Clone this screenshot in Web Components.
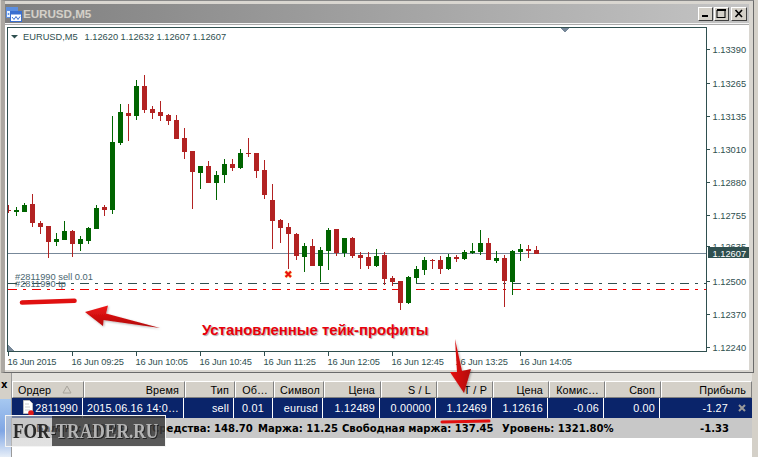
<!DOCTYPE html>
<html>
<head>
<meta charset="utf-8">
<style>
html, body { margin: 0; padding: 0; }
body { position: relative; width: 758px; height: 457px; overflow: hidden; background: #d4d0c8; font-family: "Liberation Sans", sans-serif; }
</style>
</head>
<body>
<mt-window caption="EURUSD,M5"><mt-chart></mt-chart></mt-window>
<mt-terminal>
    <mt-header-row></mt-header-row>
    <mt-order-row></mt-order-row>
    <mt-total-row></mt-total-row>
</mt-terminal>
<mt-annotations></mt-annotations>
<mt-watermark></mt-watermark>

<script>
const COLUMNS = '72px 101px 50px 39px 50px 57px 56px 56px 56px 56px 56px 91px'

class MT_Window extends HTMLElement {
    constructor() {
        super()
        this.attachShadow({mode: 'open'})
        this.shadowRoot.innerHTML = `
            <style>
                :host { display: block; box-sizing: border-box; width: 753px; height: 373px; margin-left: 1px; background: #d9d6d0;
                        border-top: 1px solid #8a8a8a; border-left: 4px solid #aca8a2; border-right: 1px solid #6a6a6a; border-bottom: 1px solid #6a6a6a;
                        padding: 3px 4px 3px 0; }
                .title { display: flex; align-items: center; height: 19px; padding: 0 1px 0 1px; background: linear-gradient(to right, #7f7f7f, #c4c4c4); }
                .title svg.icon { margin-right: 1px; flex: none; }
                .caption { flex: 1; font: bold 11.6px "Liberation Sans", sans-serif; color: #d4d0c8; text-shadow: 1px 0 0 #8c8c8c; }
                .btn { box-sizing: border-box; width: 15px; height: 14px; margin-left: 1px; background: #d4d0c8; display: flex; align-items: center; justify-content: center;
                       border: 1px solid; border-color: #fff #404040 #404040 #fff; }
                .btn.close { width: 16px; margin: 0 1px 0 2px; }
                .client { border-top: 1px solid #f4f4f4; height: 346px; background: #fff; box-shadow: inset 0 1px 0 #aaa; }
            </style>
            <div class="title">
                <svg class="icon" width="16" height="16" viewBox="0 0 16 16">
                    <rect x="0.5" y="1.5" width="11" height="10" fill="#e8f2ff" stroke="#5b8ee0"/>
                    <rect x="1" y="2" width="10" height="3" fill="#5b8ee0"/>
                    <rect x="4.5" y="5.5" width="11" height="10" fill="#fff" stroke="#3a6fd0"/>
                    <rect x="5" y="6" width="10" height="2.5" fill="#3a6fd0"/>
                    <path d="M6 11 8 13.5 10 10.5 12 13.5 14 10.5" fill="none" stroke="#3a6fd0"/>
                    <path d="M2 7 3 9M2 9 3 7" stroke="#5b8ee0"/>
                </svg>
                <span class="caption"></span>
                <div class="btn"><svg width="9" height="9"><rect x="1" y="6" width="6" height="2" fill="#000"/></svg></div>
                <div class="btn"><svg width="11" height="10"><rect x="1" y="1.5" width="8" height="7" fill="none" stroke="#000"/><rect x="1" y="0" width="9" height="2" fill="#000"/></svg></div>
                <div class="btn close"><svg width="10" height="9"><path d="M1.5 1 8 8M8 1 1.5 8" stroke="#000" stroke-width="1.6" fill="none"/></svg></div>
            </div>
            <div class="client"><slot></slot></div>
        `
        this.shadowRoot.querySelector('.caption').textContent = this.getAttribute('caption') || ''
    }
}

// x of first candle is 8, then every 8px: [high, body top, body bottom, low, bull?]
const CANDLES = [
    [205,210,211,213,0],[207,210,212,216,1],[203,205,212,212,1],[194,204,223,227,0],[221,223,227,234,0],
    [226,226,242,258,0],[233,239,242,246,1],[221,231,240,240,1],[230,231,244,257,0],[236,239,244,251,1],
    [227,228,241,244,1],[205,208,229,229,1],[205,207,210,216,0],[116,142,210,214,1],[104,112,143,145,1],
    [104,113,116,141,0],[80,86,116,120,1],[75,86,110,113,0],[106,109,113,119,0],[101,112,116,121,0],
    [114,115,121,125,0],[115,120,139,139,0],[128,138,152,159,0],[151,151,172,209,0],[166,166,173,189,1],
    [161,166,183,183,0],[171,175,183,200,1],[159,164,175,183,1],[159,164,168,171,0],[149,153,168,169,1],
    [138,153,154,157,0],[153,153,171,178,0],[160,170,195,199,0],[184,200,221,249,0],[219,220,228,243,0],
    [223,227,234,269,0],[233,234,256,260,0],[243,246,257,272,1],[239,246,266,266,0],[247,250,266,282,1],
    [228,230,251,270,1],[229,229,253,256,0],[238,238,253,257,1],[237,238,256,258,0],[252,255,258,269,0],
    [252,257,266,269,0],[249,256,266,267,1],[252,255,279,285,0],[276,278,282,286,0],[281,281,303,310,0],
    [276,277,303,304,1],[266,269,278,283,1],[257,260,270,275,1],[259,260,261,269,0],[256,260,269,274,0],
    [254,257,269,270,1],[255,257,259,262,0],[250,252,259,260,1],[243,251,253,254,1],[230,243,252,255,1],
    [238,243,260,260,0],[251,258,261,263,1],[255,258,281,307,0],[250,251,282,295,1],[244,249,252,261,1],
    [245,249,251,258,0],[246,250,254,254,0]
]
const PRICE_LABELS = [['1.13390',53],['1.13265',87],['1.13135',120],['1.13010',153],['1.12880',186],['1.12755',219],['1.12635',250],['1.12500',285],['1.12370',318],['1.12240',351]]
const TIME_LABELS = ['16 Jun 2015','16 Jun 09:25','16 Jun 10:05','16 Jun 10:45','16 Jun 11:25','16 Jun 12:05','16 Jun 12:45','16 Jun 13:25','16 Jun 14:05']

class MT_Chart extends HTMLElement {
    constructor() {
        super()
        this.attachShadow({mode: 'open'})
        this.shadowRoot.innerHTML = `
            <style>
                :host { display: block; }
                svg { display: block; }
                text { font: 9.3px "Liberation Sans", sans-serif; fill: #2f4f4f; }
            </style>
            <svg width="744" height="346" viewBox="5 24 744 346" shape-rendering="crispEdges">${this.getChart()}</svg>
        `
    }

    getChart() {
        let s = ''
        s += '<line x1="8" x2="706" y1="253.5" y2="253.5" stroke="#778899"/>'
        s += '<line x1="8" x2="706" y1="283.5" y2="283.5" stroke="#2f4f4f" stroke-dasharray="9 6 3 6"/>'
        s += '<line x1="8" x2="706" y1="289.5" y2="289.5" stroke="#f00000" stroke-dasharray="9 6 3 6"/>'
        CANDLES.forEach((c, i) => {
            const x = 8 + i * 8
            const col = c[4] ? '#006400' : '#b22222'
            s += `<rect x="${x}" y="${c[0]}" width="1" height="${c[3] - c[0]}" fill="${col}"/>`
            // the first candle is cut by the frame
            const bx = i == 0 ? x : x - 2
            const bw = i == 0 ? 3 : 5
            s += `<rect x="${bx}" y="${c[1]}" width="${bw}" height="${Math.max(c[2] - c[1], 1)}" fill="${col}"/>`
        })
        s += '<rect x="7.5" y="27.5" width="699" height="324" fill="none" stroke="#2f4f4f"/>'
        s += '<path d="M561 28H569L565 33Z" fill="#778899"/>'
        s += '<path d="M8 345V351H14Z" fill="#778899"/>'
        s += '<path d="M11 35H18L14.5 38.5Z" fill="#2f4f4f" shape-rendering="auto"/>'
        s += '<text x="23" y="40">EURUSD,M5<tspan x="84.5">1.12620</tspan><tspan x="120.5">1.12632</tspan><tspan x="156.5">1.12607</tspan><tspan x="192.5">1.12607</tspan></text>'
        PRICE_LABELS.forEach(p => {
            s += `<rect x="707" y="${p[1] - 4}" width="3" height="1" fill="#2f4f4f"/>`
            s += `<text x="712.5" y="${p[1]}">${p[0]}</text>`
        })
        TIME_LABELS.forEach((t, i) => {
            const x = 8 + i * 64
            s += `<rect x="${x}" y="352" width="1" height="4" fill="#2f4f4f"/>`
            s += `<text x="${x - .5}" y="365" textLength="${i ? 52.5 : 49}">${t}</text>`
        })
        s += '<rect x="708" y="247" width="41" height="11" fill="#2f4f4f"/>'
        s += '<text x="712.5" y="256.5" style="fill:#fff">1.12607</text>'
        s += '<text x="15" y="280" style="fill:#4a6670">#2811990 sell 0.01</text>'
        s += '<text x="15" y="286.5" style="fill:#4a6670">#2811990 tp</text>'
        s += '<g shape-rendering="auto"><path d="M285.5 271.5 291 277M291 271.5 285.5 277" stroke="#ffd27a" stroke-width="3.4"/><path d="M285.5 271.5 291 277M291 271.5 285.5 277" stroke="#e81010" stroke-width="2"/></g>'
        return s
    }
}

class MT_Terminal extends HTMLElement {
    constructor() {
        super()
        this.attachShadow({mode: 'open'})
        this.shadowRoot.innerHTML = `
            <style>
                :host { display: flex; height: 84px; }
                .strip { width: 11px; flex: none; display: flex; flex-direction: column; border-right: 1px solid #9a9a9a; }
                .strip .top { height: 26px; padding-top: 5px; box-sizing: border-box; font: bold 10px "DejaVu Sans", sans-serif; color: #000; line-height: 14px; padding-left: 1px; }
                .strip .bar { flex: 1; background: linear-gradient(to bottom, #a6c8f0, #80a6e4 55%, #e6eef8); }
                .main { width: 740px; flex: none; display: flex; flex-direction: column; padding-top: 8px; box-sizing: border-box; background: #e4e2dd; }
                .body { flex: 1; background: #fff; display: flex; flex-direction: column; }
                .edge { flex: 1; }
            </style>
            <div class="strip"><div class="top">x</div><div class="bar"></div></div>
            <div class="main"><div class="body"><slot></slot></div></div>
            <div class="edge"></div>
        `
    }
}

class MT_HeaderRow extends HTMLElement {
    constructor() {
        super()
        this.attachShadow({mode: 'open'})
        const cols = [['Ордер','left'],['Время'],['Тип'],['Об…'],['Символ','center'],['Цена'],['S / L'],['T / P'],['Цена'],['Комис…'],['Своп'],['Прибыль']]
        this.shadowRoot.innerHTML = `
            <style>
                :host { display: grid; grid-template-columns: ${COLUMNS}; height: 17px; }
                div { position: relative; box-sizing: border-box; height: 17px; background: #d4d0c8; color: #000; text-align: right; padding: 0 5px; overflow: hidden; white-space: nowrap;
                      font: 10.8px/16px "Liberation Sans", sans-serif; border: 1px solid; border-color: #fff #808080 #808080 #fff; letter-spacing: .15px; }
                .left { text-align: left; } .center { text-align: center; }
                svg { position: absolute; left: 49px; top: 3px; }
            </style>
            ${cols.map(c => `<div class="${c[1] || ''}">${c[0]}</div>`).join('')}
        `
        const sort = document.createElementNS('http://www.w3.org/2000/svg', 'svg')
        sort.setAttribute('width', '10')
        sort.setAttribute('height', '9')
        sort.innerHTML = '<path d="M5 1 9 8H1Z" fill="none" stroke="#a8a49c"/>'
        this.shadowRoot.querySelector('div').appendChild(sort)
    }
}

class MT_OrderRow extends HTMLElement {
    constructor() {
        super()
        this.attachShadow({mode: 'open'})
        const vals = ['2811990','2015.06.16 14:0…','sell','0.01','eurusd','1.12489','0.00000','1.12469','1.12616','-0.06','0.00','-1.27']
        this.shadowRoot.innerHTML = `
            <style>
                :host { display: grid; grid-template-columns: ${COLUMNS}; height: 20px; background: #0a246a; }
                div { box-sizing: border-box; display: flex; align-items: center; justify-content: flex-end; height: 20px; padding-right: 4px; color: #fff; white-space: nowrap; overflow: hidden;
                      font: 10.8px "Liberation Sans", sans-serif; border-right: 1px solid #fff; position: relative; left: -1px; letter-spacing: .2px; }
                div:first-child { left: 0; width: 71px; justify-content: space-between; padding-left: 4px; padding-right: 8px; }
                div:first-child svg { flex: none; }
                div:nth-child(5) { justify-content: center; padding: 0; }
                div:last-child { border-right: 0; padding-right: 24px; left: 0; }
                .x { position: absolute; right: 6px; top: 6px; }
            </style>
            ${vals.map(v => `<div>${v}</div>`).join('')}
        `
        const first = this.shadowRoot.querySelector('div')
        const icon = document.createElementNS('http://www.w3.org/2000/svg', 'svg')
        icon.setAttribute('width', '13')
        icon.setAttribute('height', '16')
        icon.innerHTML = '<path d="M1.5 .5H7.5L10.5 3.5V13.5H1.5Z" fill="#fff" stroke="#bbb"/><path d="M3 4H7M3 7H8M3 10H8" stroke="#ccc"/><circle cx="9" cy="13" r="2.8" fill="#e01818"/>'
        first.prepend(icon)
        const x = document.createElementNS('http://www.w3.org/2000/svg', 'svg')
        x.setAttribute('class', 'x')
        x.setAttribute('width', '8')
        x.setAttribute('height', '8')
        x.innerHTML = '<path d="M1 1 7 7M7 1 1 7" stroke="#9a9a9a" stroke-width="2"/>'
        this.shadowRoot.querySelector('div:last-child').appendChild(x)
    }
}

class MT_TotalRow extends HTMLElement {
    constructor() {
        super()
        this.attachShadow({mode: 'open'})
        this.shadowRoot.innerHTML = `
            <style>
                :host { display: flex; align-items: center; height: 20px; background: #c8c8c8; color: #000; font: bold 10.05px "DejaVu Sans", sans-serif; padding-left: 24px; white-space: nowrap; }
                .items { display: grid; grid-template-columns: 116px 106px 84px 160px auto; flex: 1; }
                .sum { width: 52px; flex: none; padding-right: 23px; text-align: right; }
            </style>
            <div class="items">
                <span>Баланс: 150.03</span><span>Средства: 148.70</span><span>Маржа: 11.25</span><span>Свободная маржа: 137.45</span><span>Уровень: 1321.80%</span>
            </div>
            <span class="sum">-1.33</span>
        `
    }
}

class MT_Annotations extends HTMLElement {
    constructor() {
        super()
        this.attachShadow({mode: 'open'})
        this.shadowRoot.innerHTML = `
            <style>
                :host { position: absolute; left: 0; top: 0; width: 758px; height: 457px; pointer-events: none; }
                svg { position: absolute; left: 0; top: 0; }
                .note { position: absolute; left: 202px; top: 322px; font: bold 14.9px "Liberation Sans", sans-serif; color: #e8000b; white-space: nowrap; text-shadow: 1px 1px 1px #aaa; }
            </style>
            <svg width="758" height="457">
                <defs>
                    <linearGradient id="a1" x1="0" y1="0" x2="0" y2="1"><stop offset="0" stop-color="#f01818"/><stop offset="1" stop-color="#b00808"/></linearGradient>
                    <linearGradient id="a2" x1="0" y1="0" x2="1" y2="0"><stop offset="0" stop-color="#e81010"/><stop offset="1" stop-color="#b00808"/></linearGradient>
                    <filter id="sh" x="-20%" y="-20%" width="140%" height="140%"><feDropShadow dx="1" dy="1" stdDeviation="1" flood-color="#000" flood-opacity=".3"/></filter>
                </defs>
                <path d="M22 302.5 74.5 300.8" stroke="#e01010" stroke-width="4.6" stroke-linecap="round"/>
                <path d="M85 312 108 305.5 106 313.5 160 328 103.5 320 103 326Z" fill="url(#a1)" filter="url(#sh)"/>
                <path d="M455 339 462 371 471 369 464 393 450 372 457 372Z" fill="url(#a2)" filter="url(#sh)"/>
                <path d="M442 422 489 421" stroke="#e01010" stroke-width="3" stroke-linecap="round"/>
            </svg>
            <div class="note">Установленные тейк-профиты</div>
        `
    }
}

class MT_Watermark extends HTMLElement {
    constructor() {
        super()
        this.attachShadow({mode: 'open'})
        this.shadowRoot.innerHTML = `
            <style>
                :host { position: absolute; left: 5px; top: 415px; box-sizing: border-box; width: 161px; height: 32px; border: 1px solid #f4f4f4;
                        background: linear-gradient(to right, rgba(200,200,200,.55) 46px, rgba(60,60,60,.85) 46px);
                        font: bold 17.4px/30px "Liberation Serif", serif; padding-left: 7px; white-space: nowrap; }
                .w { display: inline-block; transform: scaleY(1.2); }
                .a { color: #2a2a2a; }
                .b { color: #b4b4b4; text-shadow: 1px 1px 0 #222; }
            </style>
            <span class="w"><span class="a">FOR</span><span class="b">-TRADER.RU</span></span>
        `
    }
}

window.customElements.define('mt-window', MT_Window)
window.customElements.define('mt-chart', MT_Chart)
window.customElements.define('mt-terminal', MT_Terminal)
window.customElements.define('mt-header-row', MT_HeaderRow)
window.customElements.define('mt-order-row', MT_OrderRow)
window.customElements.define('mt-total-row', MT_TotalRow)
window.customElements.define('mt-annotations', MT_Annotations)
window.customElements.define('mt-watermark', MT_Watermark)
</script>
</body>
</html>
